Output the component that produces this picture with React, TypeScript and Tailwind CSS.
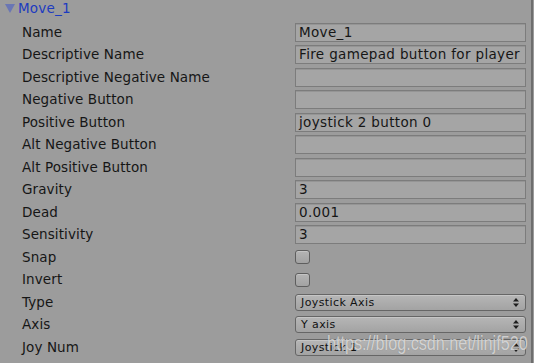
import React from 'react'

type Row =
  | { label: string; kind: 'text'; value: string }
  | { label: string; kind: 'check' }
  | { label: string; kind: 'select'; value: string }

const rows: Row[] = [
  { label: 'Name', kind: 'text', value: 'Move_1' },
  { label: 'Descriptive Name', kind: 'text', value: 'Fire gamepad button for player' },
  { label: 'Descriptive Negative Name', kind: 'text', value: '' },
  { label: 'Negative Button', kind: 'text', value: '' },
  { label: 'Positive Button', kind: 'text', value: 'joystick 2 button 0' },
  { label: 'Alt Negative Button', kind: 'text', value: '' },
  { label: 'Alt Positive Button', kind: 'text', value: '' },
  { label: 'Gravity', kind: 'text', value: '3' },
  { label: 'Dead', kind: 'text', value: '0.001' },
  { label: 'Sensitivity', kind: 'text', value: '3' },
  { label: 'Snap', kind: 'check' },
  { label: 'Invert', kind: 'check' },
  { label: 'Type', kind: 'select', value: 'Joystick Axis' },
  { label: 'Axis', kind: 'select', value: 'Y axis' },
  { label: 'Joy Num', kind: 'select', value: 'Joystick 1' },
]

const font = { fontFamily: '"DejaVu Sans", Verdana, sans-serif' }

const Arrows = () => (
  <svg width="6" height="9" viewBox="0 0 6 9" className="shrink-0">
    <path d="M3 0 L6 3.5 H0 Z" fill="#1e1e1e" />
    <path d="M3 9 L6 5.5 H0 Z" fill="#1e1e1e" />
  </svg>
)

const Field: React.FC<{ row: Row }> = ({ row }) => {
  if (row.kind === 'text') {
    return (
      <div className="w-[231px] h-[19px] border border-[#7c7c7c] bg-[#a5a5a5] shadow-[inset_0_1px_0_#959595] flex items-center px-[3px] text-[13.5px] tracking-[0.35px] text-[#161616] leading-none whitespace-nowrap overflow-hidden">
        {row.value}
      </div>
    )
  }
  if (row.kind === 'check') {
    return (
      <div className="w-[15px] h-[14px] rounded-[3px] border border-[#5e5e5e] bg-gradient-to-b from-[#b4b4b4] to-[#a2a2a2] shadow-[inset_0_1px_0_#c4c4c4]" />
    )
  }
  return (
    <div className="w-[231px] h-[17px] rounded-[3px] border border-[#666] bg-gradient-to-b from-[#b6b6b6] to-[#a3a3a3] shadow-[inset_0_1px_0_#c6c6c6] flex items-center justify-between pl-[5px] pr-[6px] text-[11px] text-[#111] leading-none tracking-[0.4px]">
      <span>{row.value}</span>
      <Arrows />
    </div>
  )
}

export default function App() {
  return (
    <div className="relative w-[534px] h-[363px] overflow-hidden bg-[#9c9c9c]" style={font}>
      <div className="absolute top-0 bottom-0 left-[531px] w-[2px] bg-[#6e6e6e]" />
      <div className="h-[17px] flex items-center pl-[5px] gap-[3px]">
        <svg width="10" height="9" viewBox="0 0 10 9">
          <path d="M0 0 H10 L5 9 Z" fill="#6a76b4" />
        </svg>
        <span className="text-[13.5px] tracking-[0.2px] text-[#1c3bc0] leading-none">Move_1</span>
      </div>
      <div className="mt-[4px] flex flex-col">
        {rows.map((row) => (
          <div key={row.label} className="h-[22.5px] flex items-center">
            <div className="w-[295px] pl-[22px] text-[13.5px] tracking-[0.1px] text-[#161616] leading-none whitespace-nowrap">
              {row.label}
            </div>
            <Field row={row} />
          </div>
        ))}
      </div>
      <div
        className="absolute left-[327px] top-[334px] origin-left scale-x-[0.83] text-[19.5px] text-white/65 leading-none whitespace-nowrap [text-shadow:0_0_1px_rgba(80,80,80,0.6)]"
        style={{ fontFamily: '"Liberation Sans", Arial, sans-serif' }}
      >
        https://blog.csdn.net/linjf520
      </div>
    </div>
  )
}
